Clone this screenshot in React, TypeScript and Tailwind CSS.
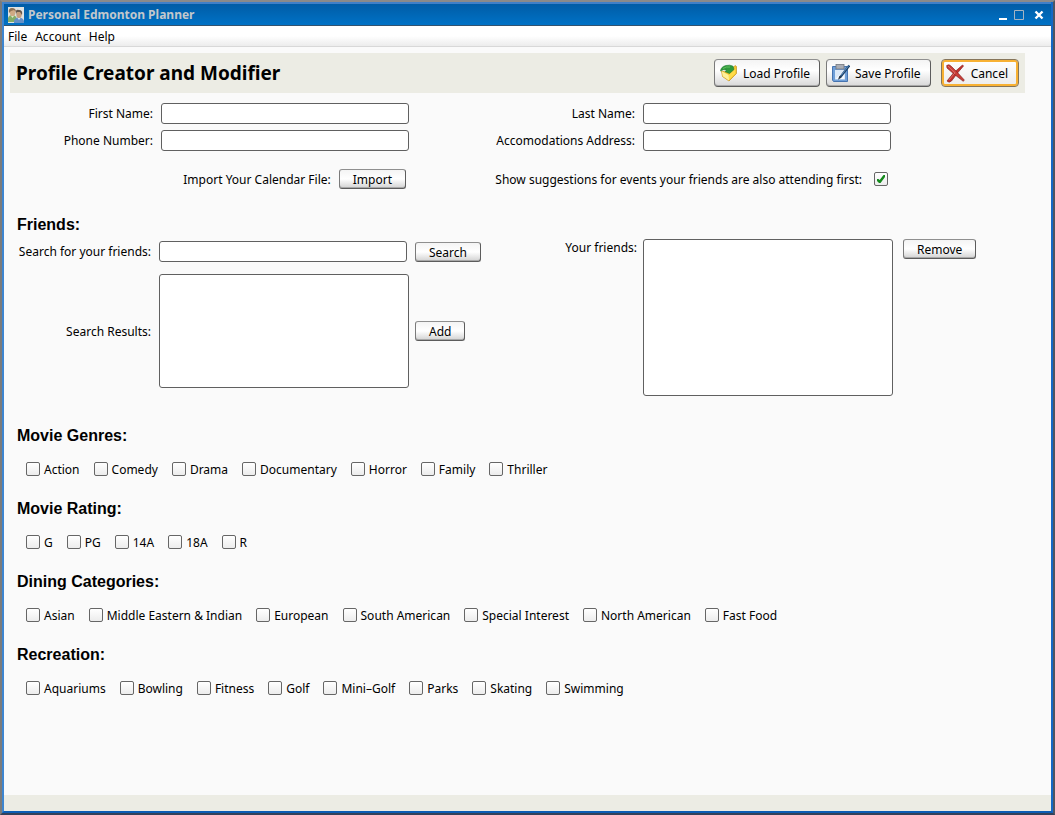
import { useId } from "react";
import type { ReactNode } from "react";

const raised =
  "rounded-[3px] border border-t-[#8f8f8f] border-l-[#7a7a7a] border-r-[#5c5c5c] border-b-[#5c5c5c] bg-linear-to-b from-[#f4f4f4] via-white via-50% to-[#d2d2d2]";
const field = "rounded-[3px] border border-[#606060] bg-white";

function AppIcon() {
  return (
    <svg className="size-4" viewBox="0 0 16 16" aria-hidden="true">
      <rect width="16" height="16" fill="#dfe3e2" />
      <path d="M0 15V11Q1 8 4 8Q8 8 9 12L8 15Z" fill="#84ad68" />
      <path d="M3 9L4.5 11L6 9" fill="#dbe9c8" />
      <ellipse cx="4.6" cy="5.4" rx="2.8" ry="3.6" fill="#d0aa84" />
      <path d="M1 6Q0 1 4 1Q8 1 8 5L6 3L3 4Z" fill="#8f7152" />
      <path d="M6 16V14Q7 10.5 11 10.5Q15 10.5 16 14V16Z" fill="#6590c6" />
      <path d="M9.5 11L11 13L12.5 11" fill="#d6e4f5" />
      <ellipse cx="11" cy="7.5" rx="2.7" ry="3.5" fill="#c69f7c" />
      <path d="M8 7Q7 2 11 3Q15 3 14 8L12 5L9 5Z" fill="#66574a" />
    </svg>
  );
}

function LoadIcon() {
  return (
    <svg className="size-[18px]" viewBox="0 0 18 18" aria-hidden="true">
      <path d="M1.5 7L8 8.5L15 1.5L16.5 2.5V9.5L9 17L2.5 12.5Z" fill="#f2c52e" stroke="#c4921e" strokeWidth="0.7" />
      <path d="M1.8 7.3L8.8 11L9 16.6L2.8 12.3Z" fill="#fff09a" />
      <path d="M8.8 11L15.3 4.5V9.5L9 16Z" fill="#ffdc4a" />
      <path d="M0.5 7Q1 2.5 6 1.5Q10 0.5 13 2.2L14 5.5L9.5 9.5L5 7.5L7 6.2Q3.5 4.8 0.5 7Z" fill="#2f9b3c" stroke="#1c7a30" strokeWidth="0.6" />
      <path d="M3 4.5Q6 2.3 10 3" fill="none" stroke="#63c061" strokeWidth="1" />
    </svg>
  );
}

function SaveIcon() {
  return (
    <svg className="size-[18px]" viewBox="0 0 18 18" aria-hidden="true">
      <path d="M0.5 2.5H15.5V17.5H1.5L0.5 16Z" fill="#6f9fd8" stroke="#4674b0" />
      <rect x="4" y="0.5" width="8" height="4.5" fill="#a9adb5" stroke="#73777e" strokeWidth="0.8" />
      <rect x="3" y="6" width="10" height="9.5" fill="#dce9f8" />
      <path d="M4 14.5L12 6.5V15H4Z" fill="#f5f9ff" />
      <path d="M17.3 1.5L8 13.5" stroke="#1c4168" strokeWidth="2.2" />
      <path d="M16.8 1.5L9 11.5" stroke="#6da0d4" strokeWidth="0.8" />
      <path d="M7.3 12L6 15.8L9.2 13.7Z" fill="#27313d" />
    </svg>
  );
}

function CancelIcon() {
  return (
    <svg className="size-[19px]" viewBox="0 0 19 19" aria-hidden="true">
      <path d="M16.5 1L17.5 2L11.5 9L5.5 17Q3 19.3 1 17L7.5 9Z" fill="#c4302c" stroke="#862423" strokeWidth="0.7" />
      <path d="M0.7 1.5Q3 -0.5 5.5 2.5L10.5 7.5L18.3 16L17.3 17.3L8.5 10.5L1 4Z" fill="#c93c37" stroke="#862423" strokeWidth="0.7" />
      <path d="M2 2L9 8.8L3 16" fill="none" stroke="#e07a72" strokeWidth="0.8" />
    </svg>
  );
}

function ToolButton({ icon, children, focused = false }: { icon: ReactNode; children: ReactNode; focused?: boolean }) {
  return (
    <button
      type="button"
      className={
        focused
          ? "flex h-7 items-center gap-1.5 rounded-[4px] border border-[#86755a] bg-linear-to-b from-white to-[#ececec] pr-2.5 pl-1 whitespace-nowrap inset-ring-2 inset-ring-[#f8b133]"
          : "flex h-7 items-center gap-[5px] rounded-[4px] border border-t-[#8f8f8f] border-l-[#7a7a7a] border-r-[#5c5c5c] border-b-[#5c5c5c] bg-linear-to-b from-[#f4f4f4] via-white via-40% to-[#d8d8d8] pr-[9px] pl-[5px] whitespace-nowrap shadow-[inset_0_-1px_0_#a8a8a8]"
      }
    >
      {icon}
      <span className="pt-px">{children}</span>
    </button>
  );
}

function PushButton({ children }: { children: ReactNode }) {
  return (
    <button
      type="button"
      className={`${raised} h-5 px-[13px] leading-[17px] whitespace-nowrap shadow-[inset_0_-1px_0_#a8a8a8]`}
    >
      {children}
    </button>
  );
}

function TextField({ label }: { label: string }) {
  const id = useId();
  return (
    <div className="flex h-[21px] items-center gap-2">
      <label htmlFor={id} className="flex w-[143px] shrink-0 justify-end whitespace-nowrap">
        {label}
      </label>
      <input id={id} type="text" className={`${field} h-[21px] w-[248px] px-1 outline-none`} />
    </div>
  );
}

function CheckBox({ id, checked = false }: { id: string; checked?: boolean }) {
  return (
    <span className="relative size-[14px] shrink-0">
      <input
        id={id}
        type="checkbox"
        defaultChecked={checked}
        className="peer block size-[14px] appearance-none rounded-[2px] border border-[#666666] bg-linear-to-b from-white to-[#ececec]"
      />
      <svg
        className="pointer-events-none absolute inset-0 hidden size-[14px] peer-checked:block"
        viewBox="0 0 14 14"
        aria-hidden="true"
      >
        <path d="M3 7V9L5 11H6.5L11 5V3H9.5L5.7 8L4.5 7Z" fill="#148a1c" />
      </svg>
    </span>
  );
}

function Option({ label }: { label: string }) {
  const id = useId();
  return (
    <div className="flex items-center gap-1">
      <CheckBox id={id} />
      <label htmlFor={id} className="pt-0.5 whitespace-nowrap">
        {label}
      </label>
    </div>
  );
}

const heading = "pl-[7px] font-['Liberation_Sans',Arial,sans-serif] text-base leading-6 font-bold";

const groups = [
  { title: "Movie Genres:", options: ["Action", "Comedy", "Drama", "Documentary", "Horror", "Family", "Thriller"] },
  { title: "Movie Rating:", options: ["G", "PG", "14A", "18A", "R"] },
  {
    title: "Dining Categories:",
    options: ["Asian", "Middle Eastern & Indian", "European", "South American", "Special Interest", "North American", "Fast Food"],
  },
  {
    title: "Recreation:",
    options: ["Aquariums", "Bowling", "Fitness", "Golf", "Mini–Golf", "Parks", "Skating", "Swimming"],
  },
];

export default function App() {
  return (
    <div className="min-h-screen border-2 border-t-[#8a8a8a] border-r-[#4d5563] border-b-[#33415a] border-l-[#7b7b7b] font-['Noto_Sans','Open_Sans',sans-serif] text-xs text-black">
      <div className="flex min-h-[calc(100vh-4px)] flex-col border-x-2 border-b-2 border-r-[#1468c6] border-b-[#0c5cb4] border-l-[#3d85d0] bg-[#fafafa]">
        <header className="flex h-6 items-center gap-1 border-t-2 border-b border-t-[#3f7fc8] border-b-[#33536f] bg-linear-to-b from-[#005ca6] to-[#0072c6] px-1">
          <AppIcon />
          <h1 className="flex-1 text-xs font-bold text-[#c3c8cc]">Personal Edmonton Planner</h1>
          <div className="flex items-center gap-[7px] pr-[3px]">
            <button type="button" aria-label="Minimize" className="flex">
              <svg className="size-[10px]" viewBox="0 0 10 10">
                <path d="M2 8H10V10H2Z" fill="white" />
              </svg>
            </button>
            <button type="button" aria-label="Maximize" className="flex">
              <svg className="size-[10px]" viewBox="0 0 10 10">
                <path d="M0.5 0.5H9.5V9.5H0.5Z" fill="none" stroke="#a5b4c2" />
              </svg>
            </button>
            <button type="button" aria-label="Close" className="ml-[3px] flex">
              <svg className="size-[10px]" viewBox="0 0 10 10">
                <path d="M1.5 1.5L8.5 8.5M8.5 1.5L1.5 8.5" stroke="white" strokeWidth="2.4" />
              </svg>
            </button>
          </div>
        </header>

        <nav className="flex h-[21px] items-center gap-2 border-b border-[#d8d8d8] bg-linear-to-b from-white via-white via-50% to-[#ececec] px-1 pt-0.5">
          <button type="button">File</button>
          <button type="button">Account</button>
          <button type="button">Help</button>
        </nav>

        <main className="flex-1 pt-1.5 pr-[26px] pl-1.5">
          <div className="flex h-10 items-center bg-[#ecece4] px-1.5">
            <h2 className="flex-1 text-[19px] leading-6 font-bold">Profile Creator and Modifier</h2>
            <div className="flex items-center">
              <div className="mr-2.5 flex gap-1.5">
                <ToolButton icon={<LoadIcon />}>Load Profile</ToolButton>
                <ToolButton icon={<SaveIcon />}>Save Profile</ToolButton>
              </div>
              <ToolButton icon={<CancelIcon />} focused>
                Cancel
              </ToolButton>
            </div>
          </div>

          <div className="mt-2.5 grid grid-cols-[482px_1fr] gap-y-1.5">
            <TextField label="First Name:" />
            <TextField label="Last Name:" />
            <TextField label="Phone Number:" />
            <TextField label="Accomodations Address:" />
          </div>

          <div className="mt-[18px] grid grid-cols-[482px_1fr]">
            <div className="flex w-[396px] items-center justify-end gap-2">
              <span className="pt-0.5">Import Your Calendar File:</span>
              <PushButton>Import</PushButton>
            </div>
            <div className="flex w-[396px] items-center justify-end gap-3">
              <label htmlFor="suggest" className="pt-0.5 whitespace-nowrap">
                Show suggestions for events your friends are also attending first:
              </label>
              <CheckBox id="suggest" checked />
            </div>
          </div>

          <section className="mt-6">
            <h3 className={heading}>Friends:</h3>
            <div className="grid grid-cols-[482px_1fr] pt-0.5">
              <div className="grid grid-cols-[141px_250px_auto] content-start items-center gap-x-2 gap-y-3 pt-0.5">
                <label htmlFor="search" className="justify-self-end whitespace-nowrap">
                  Search for your friends:
                </label>
                <input id="search" type="text" className={`${field} h-[21px] w-[248px] px-1 outline-none`} />
                <div className="-ml-0.5 flex pt-px">
                  <PushButton>Search</PushButton>
                </div>
                <label htmlFor="results" className="justify-self-end pt-0.5 whitespace-nowrap">
                  Search Results:
                </label>
                <select id="results" multiple className={`${field} h-[114px] w-full outline-none`} />
                <div className="-ml-0.5 flex">
                  <PushButton>Add</PushButton>
                </div>
              </div>
              <div className="flex items-start">
                <label htmlFor="friends" className="mr-1.5 flex w-[145px] justify-end leading-[18px]">
                  Your friends:
                </label>
                <select id="friends" multiple className={`${field} mr-2.5 h-[157px] w-[250px] outline-none`} />
                <PushButton>Remove</PushButton>
              </div>
            </div>
          </section>

          <div className="mt-7 flex flex-col gap-[18px] pb-6">
            {groups.map((group) => (
              <section key={group.title}>
                <h3 className={heading}>{group.title}</h3>
                <div className="mt-[11px] flex h-5 items-center gap-[14px] pl-4">
                  {group.options.map((option) => (
                    <Option key={option} label={option} />
                  ))}
                </div>
              </section>
            ))}
          </div>
        </main>

        <footer className="h-4 bg-[#ecece4]" />
      </div>
    </div>
  );
}
